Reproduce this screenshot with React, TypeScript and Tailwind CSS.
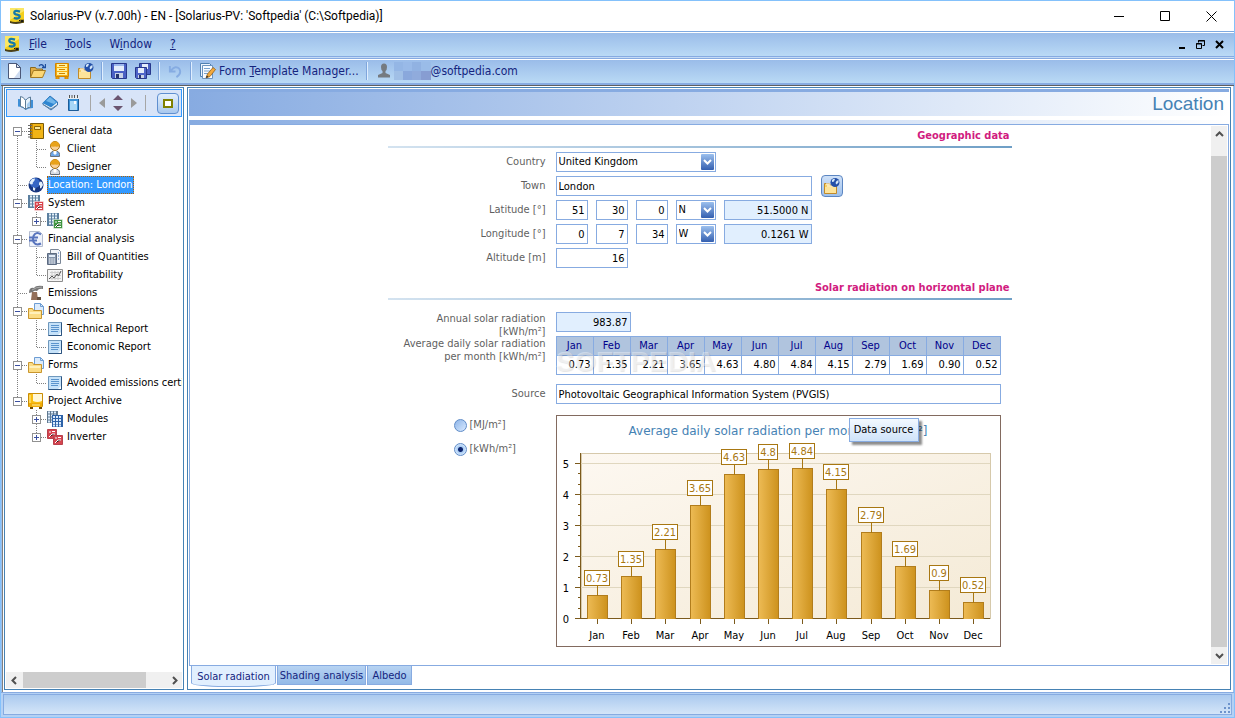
import { ReactNode } from "react";
import clsx from "clsx";

type IconProps = { children: ReactNode; size?: number };

const Icon = ({ children, size = 16 }: IconProps) => (
  <svg width={size} height={size} viewBox="0 0 16 16" className="shrink-0" aria-hidden="true">
    {children}
  </svg>
);

const AppIcon = () => (
  <Icon>
    <path d="M1 0h14v15H1z" fill="#f4cf1c" />
    <path d="M1 0h14v3L1 12z" fill="#fbe765" />
    <path d="M1 13q6 2.500 14-1v2.500q-7 2.500-14 .5z" fill="#4a4018" />
    <path d="M11 3.600Q5.500 1.800 5.300 4.400q0 1.800 2.800 2.300 2.800.5 2.500 2.400Q9.800 11.300 4.800 10" fill="none" stroke="#1579a8" strokeWidth="2.300" />
    <path d="M10 12.500h1.500M12 11.500l1 2.500 1-2.500" fill="none" stroke="#111" />
  </Icon>
);

const NewIcon = () => (
  <Icon>
    <path d="M2.500.5h8l4 4v11h-12z" fill="#fff" stroke="#4b5878" />
    <path d="M8 15l6-8v8z" fill="#cddbf0" />
    <path d="M10.500.5v4h4z" fill="#dfe6f3" stroke="#4b5878" />
  </Icon>
);

const OpenIcon = () => (
  <Icon>
    <path d="M.5 14V4.500h5l1 1.500h6v3" fill="#e2ae45" stroke="#8b6a20" />
    <path d="M.5 14.500l3-7h12l-3 7z" fill="#fbd775" stroke="#a27a22" />
    <path d="M9 3q3-3 5 1M15.500 1v3.500H12" fill="none" stroke="#1f4fa0" strokeWidth="1.300" />
  </Icon>
);

const CabinetIcon = () => (
  <Icon>
    <path d="M1.500.5h13v13h-13zM2 14h3v2H2zM11 14h3v2h-3z" fill="#f6ae10" stroke="#d18400" />
    <path d="M3 2.500h10M3 6.500h10M3 10.500h10" stroke="#fff2a0" strokeWidth="3" />
    <path d="M5 2.500h6M5 6.500h6M5 10.500h6" stroke="#d18400" strokeWidth="1" />
  </Icon>
);

const GlobeFolderIcon = () => (
  <Icon>
    <path d="M.5 15.500v-10h5l1 2h6v8z" fill="#f8d166" stroke="#c18b2a" />
    <path d="M1 9h11v6H1z" fill="#fde49a" />
    <path d="M2 6h4M3 8h7" stroke="#fff" />
    <circle cx="11" cy="4.500" r="4.500" fill="#2450a8" />
    <path d="M8 2q2-2 3-1l-1 2.500-2 .5zM12.500 3l2-1v2.500l-2 2-1-1.500z" fill="#d5e8f8" />
  </Icon>
);

const SaveIcon = () => (
  <Icon>
    <path d="M.5.500h15v15h-14l-1-1z" fill="#4a60c4" stroke="#27388c" />
    <path d="M3 1h10v7H3z" fill="#e4edfb" />
    <path d="M3 1h10v2H3z" fill="#9db8ec" />
    <path d="M4 10h8v5H4z" fill="#c9d2e6" />
    <path d="M5 11h3v4H5z" fill="#26356f" />
  </Icon>
);

const SaveAllIcon = () => (
  <Icon>
    <path d="M4.500.5h11v11h-11z" fill="#4a60c4" stroke="#27388c" />
    <path d="M7 1h6v5H7z" fill="#e4edfb" />
    <path d="M.5 4.500h11v11h-10l-1-1z" fill="#4e64c8" stroke="#27388c" />
    <path d="M3 5h6v5H3z" fill="#e4edfb" />
    <path d="M3 12h6v3H3z" fill="#c9d2e6" />
    <path d="M4 12h2v3H4z" fill="#26356f" />
  </Icon>
);

const UndoIcon = () => (
  <Icon size={15}>
    <path d="M2 2v6h6M3 7q5-6 9-2 3 5-3 9" fill="none" stroke="#86ace2" strokeWidth="2" />
  </Icon>
);

const FormIcon = () => (
  <Icon>
    <path d="M.5.500h9l3 3v10h-12z" fill="#eef5fd" stroke="#4f7fb0" />
    <path d="M2.500 2.500h10v13h-10z" fill="#f8fbff" stroke="#6b93bf" />
    <path d="M4 5.500h6M4 8h6M4 10.500h4" stroke="#78a3cf" />
    <path d="M6 15l1.500-4L13 4.500l2.500 2L10 13.500z" fill="#f3a93c" stroke="#93611a" strokeWidth=".8" />
    <path d="M6 15l.8-2.500 1.700 1.300z" fill="#333" />
  </Icon>
);

const PersonIcon = () => (
  <Icon>
    <path d="M5 4a3 3.500 0 016 0q0 3-1.500 4v2L14 12v2.500H2V12l4.500-2V8Q5 7 5 4z" fill="#757a80" />
  </Icon>
);

const OpenBookIcon = () => (
  <Icon>
    <path d="M0 4v7.500q4 0 7.500 3.500 3-2 7.500-2V5z" fill="#3f8fd6" />
    <path d="M2.500 1.500q3 0 5 4v9q-2-3-5-3z" fill="#fff" stroke="#5c7c98" />
    <path d="M7.500 14.500v-9q2-3 5-3.500v10q-3 0-5 2.500z" fill="#e6f2fc" stroke="#5c7c98" />
    <path d="M9 9l3-3v5l-3 1.500z" fill="#a5cdf0" />
  </Icon>
);

const BlueBookIcon = () => (
  <Icon>
    <path d="M.5 9L8 1l7.500 6v3L9 15z" fill="#eaf3fb" stroke="#3470ac" />
    <path d="M.5 8L8 1l7.500 6L9 12.500z" fill="#2f86d0" />
    <path d="M4 6l4-4 6 5-2 2z" fill="#71b6ea" />
    <path d="M1 9.500l8 4.500 6-4" fill="none" stroke="#65839f" />
  </Icon>
);

const NotebookIcon = () => (
  <Icon>
    <path d="M2.500 2.500h10v13h-10z" fill="#3c93d8" stroke="#1c5c98" />
    <path d="M4 6h7v9H4z" fill="#a8d7f7" />
    <path d="M2 1h11v3H2z" fill="#e8edf2" />
    <path d="M3.500 0v3M6 0v3M8.500 0v3M11.500 0v3" stroke="#555" />
    <path d="M8 6h2v3H8z" fill="#f8fbff" />
  </Icon>
);

const GeneralIcon = () => (
  <Icon>
    <path d="M2.500.5h13v15h-13z" fill="#f2b516" stroke="#7a5a08" />
    <path d="M3 1h2v14H3z" fill="#c98c06" />
    <path d="M6.500 3.500h6v3h-6z" fill="#fbe694" stroke="#8a6508" />
    <path d="M0 2.500h4M0 5.500h4M0 8.500h4M0 11.500h4M0 14h4" stroke="#696969" />
  </Icon>
);

const UserIcon = ({ color }: { color: string }) => (
  <Icon>
    <path d="M3.500 15.500v-2q0-3.500 4.500-3.500t4.500 3.500v2z" fill={color} stroke="#69717c" />
    <path d="M6.500 9.500h3v3L8 14l-1.500-1.500z" fill="#fff" />
    <circle cx="8" cy="5" r="4.500" fill="#f8d098" stroke="#a8700f" />
    <path d="M3.500 5Q3.500.5 8 .5T12.500 5Q11 6 8 5.500 5 6 3.500 5z" fill="#e8a21a" />
  </Icon>
);

const GlobeIcon = () => (
  <Icon>
    <circle cx="8" cy="8" r="7.500" fill="#173680" />
    <circle cx="7" cy="6" r="5" fill="#3566c4" />
    <path d="M1 6l3-4 3-.5-.5 2L4.500 6l.5 1-2 .5zM11 6l1-1.500 2 .5 1 3-2 3.500-1-.5V8.500L11 8zM5 10l2.500 1.500-1 2.500-1.500-1z" fill="#e2f0fb" />
  </Icon>
);

const SystemIcon = ({ color }: { color: string }) => (
  <Icon>
    <path d="M0 0h12v13H0z" fill="#5b7f9f" />
    <path d="M2 1.500h9M2 4.500h9M2 7.500h9M2 10.500h9" stroke="#e6f2fc" strokeWidth="2" strokeDasharray="2 1" />
    <path d="M6.500 6.500h9v9h-9z" fill={color} stroke="#fff" strokeWidth=".5" />
    <path d="M8 9h2M8 14l3-3h3M11 8.500h3M10 13.500h4" stroke="#fff" />
  </Icon>
);

const EuroIcon = () => (
  <Icon>
    <path d="M1.500.5h10l3 3v12h-13z" fill="#eef2fb" stroke="#b4bdd0" />
    <path d="M13 3.500Q8 0 5.500 5q-1 3 0 6Q8 15 13 12.500M1 6.500h9M1 9.500h8" fill="none" stroke="#5874bd" strokeWidth="2" />
  </Icon>
);

const QuantitiesIcon = () => (
  <Icon>
    <path d="M3.500.5h8l2 2v12h-10z" fill="#f2f5fa" stroke="#7a8696" />
    <path d="M11 4h1M11 7h1M11 10h1" stroke="#4a78c0" />
    <path d="M.5 4.500h9v11h-9z" fill="#8494ab" stroke="#5c6a80" />
    <path d="M2 6h6v2H2z" fill="#e4eefa" />
    <path d="M2 10h6M2 12h6M2 14h6" stroke="#fff" strokeDasharray="1.500 .75" />
  </Icon>
);

const ProfitIcon = () => (
  <Icon>
    <path d="M.5 2.500h15v12H.5z" fill="#f4f4f4" stroke="#8d8d8d" />
    <path d="M3 5.500h11M3 8.500h11M3 11.500h11M5 4v9M8 4v9M11 4v9" stroke="#ccc" />
    <path d="M2 12l3-3 2 2 3-4 1.500 2L14 4" fill="none" stroke="#555" />
  </Icon>
);

const EmissionsIcon = () => (
  <Icon>
    <path d="M3 15l1-8h5l1 8z" fill="#94705a" />
    <path d="M9 15v-3h4v3z" fill="#66513f" />
    <path d="M1 8q0-6 5-5 2-3 9-2v3q-4-1-6 2-3-1-4 1z" fill="#777" />
    <path d="M4 5q4-3 10-3" fill="none" stroke="#aaa" />
  </Icon>
);

const DocFolderIcon = () => (
  <Icon>
    <path d="M6.500.5h6l3 3v8h-9z" fill="#dcebfb" stroke="#6d9dd3" />
    <path d="M12.500.5v3h3" fill="none" stroke="#6d9dd3" />
    <path d="M.5 15.500v-10h4l1 2h8v8z" fill="#fbdc85" stroke="#c9962e" />
    <path d="M1.500 10h11" stroke="#fff0bb" strokeWidth="2" />
  </Icon>
);

const ReportIcon = () => (
  <Icon>
    <path d="M1.500 1.500h13v13h-13z" fill="#c6e2f9" stroke="#6f98bd" />
    <path d="M14.500 1.500v13h-13" fill="none" stroke="#2c5480" />
    <path d="M11 14l3-3v3z" fill="#fff" />
    <path d="M4 4.500h8M4 6.500h8M4 8.500h8M4 10.500h7" stroke="#5b94cd" />
  </Icon>
);

const ArchiveIcon = () => (
  <Icon>
    <path d="M.5.500h14v13H.5z" fill="#f8bd12" stroke="#c98c06" />
    <path d="M5 1h9v7q-5 2-9 0z" fill="#fff7d6" />
    <path d="M1 10h13v4H1z" fill="#f0ab08" />
    <path d="M2 2v8M4 12h8" stroke="#fff0a0" />
    <path d="M2 14h3v2H2zM11 14h3v2h-3z" fill="#6d4a04" />
  </Icon>
);

const ModulesIcon = () => (
  <Icon>
    <path d="M0 0h11v12H0z" fill="#5f7890" />
    <path d="M1 1.500h9M1 4.500h9M1 7.500h9M1 10.500h9" stroke="#dcebfc" strokeWidth="2" strokeDasharray="2 1" />
    <path d="M5 4h11v12H5z" fill="#2d62a8" />
    <path d="M6 6h9M6 9h9M6 12h9M6 14.500h9" stroke="#dcebfc" strokeWidth="2" strokeDasharray="2 1" />
  </Icon>
);

const InverterIcon = () => (
  <Icon>
    <path d="M.5.500h9v9h-9zM6.500 6.500h9v9h-9z" fill="#d64550" stroke="#b8414b" />
    <path d="M2 3h2M2 8l3-3h3M5 2.500h3M8 9h2M8 14l3-3h3M11 8.500h3" stroke="#fff" />
  </Icon>
);

/* ---------- tree ---------- */

type Box = "plus" | "minus";
type GuideProps = { up?: boolean; down?: boolean; across?: boolean; box?: Box };

const Guide = ({ up, down, across, box }: GuideProps) => (
  <svg width="19" height="18" viewBox="0 0 19 18" className="shrink-0" shapeRendering="crispEdges">
    <g stroke="#808080" strokeDasharray="1 1">
      {up && <path d="M9.500 0v9" />}
      {down && <path d="M9.500 10v8" />}
      {across && <path d="M10 9.500h9" />}
    </g>
    {box && (
      <>
        <path d="M5.500 5.500h8v8h-8z" fill="#fff" stroke="#919191" />
        <path d="M7 9.500h5" stroke="#3c50a0" />
        {box === "plus" && <path d="M9.500 7v5" stroke="#3c50a0" />}
      </>
    )}
  </svg>
);

type TreeRow = {
  label: string;
  icon: ReactNode;
  guides: GuideProps[];
  selected?: boolean;
};

const line = { up: true, down: true };
const tee = { up: true, down: true, across: true };
const end = { up: true, across: true };

const rows: TreeRow[] = [
  { label: "General data", icon: <GeneralIcon />, guides: [{ down: true, across: true, box: "minus" }] },
  { label: "Client", icon: <UserIcon color="#6ea6e6" />, guides: [line, tee] },
  { label: "Designer", icon: <UserIcon color="#d5dbe3" />, guides: [line, end] },
  { label: "Location: London", icon: <GlobeIcon />, guides: [tee], selected: true },
  { label: "System", icon: <SystemIcon color="#d9434b" />, guides: [{ ...tee, box: "minus" }] },
  { label: "Generator", icon: <SystemIcon color="#3f9540" />, guides: [line, { ...end, box: "plus" }] },
  { label: "Financial analysis", icon: <EuroIcon />, guides: [{ ...tee, box: "minus" }] },
  { label: "Bill of Quantities", icon: <QuantitiesIcon />, guides: [line, tee] },
  { label: "Profitability", icon: <ProfitIcon />, guides: [line, end] },
  { label: "Emissions", icon: <EmissionsIcon />, guides: [tee] },
  { label: "Documents", icon: <DocFolderIcon />, guides: [{ ...tee, box: "minus" }] },
  { label: "Technical Report", icon: <ReportIcon />, guides: [line, tee] },
  { label: "Economic Report", icon: <ReportIcon />, guides: [line, end] },
  { label: "Forms", icon: <DocFolderIcon />, guides: [{ ...tee, box: "minus" }] },
  { label: "Avoided emissions certificate", icon: <ReportIcon />, guides: [line, end] },
  { label: "Project Archive", icon: <ArchiveIcon />, guides: [{ ...end, box: "minus" }] },
  { label: "Modules", icon: <ModulesIcon />, guides: [{}, { ...tee, box: "plus" }] },
  { label: "Inverter", icon: <InverterIcon />, guides: [{}, { ...end, box: "plus" }] },
];

const Tree = () => (
  <ul className="flex-1 overflow-hidden pt-[5px] pl-0.5">
    {rows.map((row) => (
      <li key={row.label} className="flex h-[18px] items-center whitespace-nowrap">
        {row.guides.map((g, i) => (
          <Guide key={i} {...g} />
        ))}
        <span className="ml-px flex">{row.icon}</span>
        <span
          className={clsx(
            "ml-[3px] border leading-4",
            row.selected ? "border-dotted border-[#b06000] bg-[#3399ff] text-white" : "border-transparent"
          )}
        >
          {row.label}
        </span>
      </li>
    ))}
  </ul>
);

const Arrow = ({ d }: { d: string }) => (
  <svg width="9" height="9" viewBox="0 0 9 9" aria-hidden="true">
    <path d={d} fill="none" stroke="#505050" strokeWidth="2" />
  </svg>
);

const scrollButton = "flex h-4 w-4 shrink-0 items-center justify-center";

const Sidebar = () => (
  <aside className="flex w-[180px] shrink-0 flex-col border border-[#4682b4] bg-white p-px">
    <div className="flex h-7 shrink-0 items-center border border-[#3399ff] bg-[#d8e4f8] pr-0.5 pl-[11px]">
      <button aria-label="Contents"><OpenBookIcon /></button>
      <button aria-label="Library" className="ml-2"><BlueBookIcon /></button>
      <button aria-label="Notes" className="ml-2"><NotebookIcon /></button>
      <span className="mx-2 h-4 w-px bg-[#a6a6a6]" />
      <button aria-label="Previous">
        <svg width="6" height="10" viewBox="0 0 6 10"><path d="M6 0v10L0 5z" fill="#9a9a9a" /></svg>
      </button>
      <button aria-label="Up or down" className="mx-2">
        <svg width="10" height="18" viewBox="0 0 10 18"><path d="M0 6l5-5 5 5zM0 12h10l-5 5z" fill="#6b5570" /></svg>
      </button>
      <button aria-label="Next">
        <svg width="6" height="10" viewBox="0 0 6 10"><path d="M0 0v10l6-5z" fill="#9a9a9a" /></svg>
      </button>
      <span className="mx-2 h-4 w-px bg-[#a6a6a6]" />
      <button
        aria-label="Toggle panel"
        className="ml-auto flex h-[21px] w-[22px] items-center justify-center rounded-sm border border-[#5f8fd0] bg-linear-to-b from-[#e3effc] to-[#a9c8ee]"
      >
        <span className="h-[9px] w-2.5 border-2 border-[#808000] bg-white" />
      </button>
    </div>
    <Tree />
    <div className="flex h-4 shrink-0 bg-[#f0f0f0]">
      <button aria-label="Scroll left" className={scrollButton}><Arrow d="M6 1L2.500 4.500 6 8" /></button>
      <div className="h-4 flex-1 pr-5 pl-px">
        <div className="h-full bg-[#cdcdcd]" />
      </div>
      <button aria-label="Scroll right" className={scrollButton}><Arrow d="M3 1l3.500 3.500L3 8" /></button>
    </div>
  </aside>
);

/* ---------- bars ---------- */

const TitleBar = () => (
  <header className="flex h-[30px] shrink-0 items-center bg-white pl-2">
    <AppIcon />
    <h1 className="ml-[5px] font-[Roboto,'Noto_Sans',sans-serif] text-[12px]">
      Solarius-PV (v.7.00h) - EN - [Solarius-PV: 'Softpedia' (C:\Softpedia)]
    </h1>
    <div className="ml-auto flex">
      <button aria-label="Minimize" className="flex h-[30px] w-[46px] items-center justify-center">
        <svg width="11" height="11"><path d="M0 5.500h10" stroke="#000" /></svg>
      </button>
      <button aria-label="Maximize" className="flex h-[30px] w-[46px] items-center justify-center">
        <svg width="11" height="11"><path d="M.5.500h9v9h-9z" fill="none" stroke="#000" /></svg>
      </button>
      <button aria-label="Close" className="flex h-[30px] w-[46px] items-center justify-center">
        <svg width="11" height="11"><path d="M.5.500l10 10M10.500.5l-10 10" stroke="#000" /></svg>
      </button>
    </div>
  </header>
);

const MenuBar = () => (
  <nav className="flex h-6 shrink-0 items-center border-t border-white bg-linear-to-b from-[#9abce9] to-[#badaf5] pr-2.5 pb-px pl-[3px] text-[12px] text-[#14247e]">
    <AppIcon />
    <div className="flex gap-[18px] pl-[9px]">
      <button><u>F</u>ile</button>
      <button><u>T</u>ools</button>
      <button>W<u>i</u>ndow</button>
      <button><u>?</u></button>
    </div>
    <div className="ml-auto flex items-center gap-2.5">
      <button aria-label="Minimize document"><svg width="8" height="9"><path d="M1 8h6" stroke="#000" strokeWidth="2" /></svg></button>
      <button aria-label="Restore document">
        <svg width="9" height="9"><path d="M2.500 2.500v-2h6v5h-2M2 1h7M.5 3.500h5v5h-5zM0 4h6" fill="none" stroke="#000" /></svg>
      </button>
      <button aria-label="Close document"><svg width="9" height="9"><path d="M1 1l7 7M8 1L1 8" stroke="#000" strokeWidth="2" /></svg></button>
    </div>
  </nav>
);

const Separator = () => <span className="mx-2 h-[18px] w-px bg-[#dfeeff] shadow-[-1px_0_0_#7fa6dc]" />;

const ToolBar = () => (
  <div className="flex h-6 shrink-0 items-center border-t border-white bg-linear-to-b from-[#9abce9] to-[#badaf5] pb-px pl-[5px] text-[12px] text-[#14247e]">
    <div className="flex gap-2">
      <button aria-label="New"><NewIcon /></button>
      <button aria-label="Open"><OpenIcon /></button>
      <button aria-label="Archive"><CabinetIcon /></button>
      <button aria-label="Open from web"><GlobeFolderIcon /></button>
    </div>
    <Separator />
    <div className="flex gap-2">
      <button aria-label="Save"><SaveIcon /></button>
      <button aria-label="Save all"><SaveAllIcon /></button>
    </div>
    <Separator />
    <button aria-label="Undo"><UndoIcon /></button>
    <Separator />
    <button className="flex items-center gap-[3px]">
      <FormIcon />
      <span>Form <u>T</u>emplate Manager...</span>
    </button>
    <Separator />
    <PersonIcon />
    <span className="ml-0.5 grid h-[18px] w-[37px] grid-cols-4">
      <i className="bg-[#94b6e5]" /><i className="bg-[#99bae8]" /><i className="bg-[#91b2e2]" /><i className="bg-[#9abce8]" />
      <i className="bg-[#a0bfe6]" /><i className="bg-[#8aa8dc]" /><i className="bg-[#90abdc]" /><i className="bg-[#879dd2]" />
    </span>
    <span>@softpedia.com</span>
  </div>
);

/* ---------- form ---------- */

const box = "h-5 border border-[#87abe1] outline-none";
const field = `${box} bg-white px-0.5`;
const readOnlyField = `${box} bg-[#e1effe] pr-0.5 text-right`;
const label = "w-[158px] shrink-0 text-right text-[#5f5f5f]";

const SectionTitle = ({ children }: { children: ReactNode }) => (
  <div>
    <h3 className="pr-0.5 text-right leading-4 font-bold text-[#d11c7f]">{children}</h3>
    <div className="mt-0.5 h-0.5 bg-linear-to-r from-[#d4e3f0] to-[#6f9fc6]" />
  </div>
);

type SelectProps = { id: string; options: string[]; wide?: boolean; title?: string };

const Select = ({ id, options, wide, title }: SelectProps) => (
  <div className={clsx("relative h-5", wide ? "w-40" : "w-10")}>
    <select id={id} aria-label={title} className={clsx(field, "block w-full appearance-none leading-[18px]")}>
      {options.map((o) => (
        <option key={o}>{o}</option>
      ))}
    </select>
    <svg width="13" height="16" className="pointer-events-none absolute top-0.5 right-0.5" aria-hidden="true">
      <defs>
        <linearGradient id={`${id}-g`} x1="0" y1="0" x2="0" y2="1">
          <stop offset="0" stopColor="#9cc0ee" />
          <stop offset="1" stopColor="#345fb0" />
        </linearGradient>
      </defs>
      <rect width="13" height="16" rx="1" fill={`url(#${id}-g)`} />
      <path d="M3 6l3.500 3.500L10 6" fill="none" stroke="#fff" strokeWidth="2" />
    </svg>
  </div>
);

type CoordProps = { name: string; values: string[]; sides: string[]; result: string };

const CoordRow = ({ name, values, sides, result }: CoordProps) => (
  <div className="flex items-center">
    <label htmlFor={name} className={label}>{name} [°]</label>
    <div className="ml-2.5 flex gap-2">
      {values.map((v, i) => (
        <input
          key={i}
          id={i === 0 ? name : undefined}
          aria-label={["degrees", "minutes", "seconds"][i]}
          className={clsx(field, "w-8 text-right")}
          defaultValue={v}
        />
      ))}
      <Select id={`${name}-side`} title={`${name} side`} options={sides} />
      <input aria-label={`${name} decimal`} readOnly className={clsx(readOnlyField, "w-[88px]")} value={result} />
    </div>
  </div>
);

const months = ["Jan", "Feb", "Mar", "Apr", "May", "Jun", "Jul", "Aug", "Sep", "Oct", "Nov", "Dec"];
const radiation = [0.73, 1.35, 2.21, 3.65, 4.63, 4.8, 4.84, 4.15, 2.79, 1.69, 0.9, 0.52];

const Chart = () => {
  const base = 203;
  const unit = 31;
  const left = 24;
  const step = 34.18;

  return (
    <svg viewBox="0 0 443 230" className="block w-full" role="img" aria-label="Average daily solar radiation per month">
      <defs>
        <linearGradient id="bar">
          <stop offset="0" stopColor="#edbb55" />
          <stop offset="1" stopColor="#cd921d" />
        </linearGradient>
        <linearGradient id="plot" x1="0" y1="0" x2="1" y2="1">
          <stop offset="0" stopColor="#fdf8f1" />
          <stop offset="1" stopColor="#f4ead6" />
        </linearGradient>
      </defs>
      <text x="221" y="19" textAnchor="middle" className="font-['DejaVu_Sans',sans-serif]" fontSize="12" fill="#4682b4">
        Average daily solar radiation per month [kWh/m²]
      </text>
      <g shapeRendering="crispEdges">
        <path d="M24.500 37.500h409v165h-409z" fill="url(#plot)" stroke="#d6c9ab" />
        {[1, 2, 3, 4, 5].map((n) => (
          <path key={n} d={`M24 ${base - n * unit - 0.5}h409`} stroke="#e0d7bf" />
        ))}
        {Array.from({ length: 16 }, (_, i) => (
          <path
            key={i}
            d={`M${i % 3 ? 21 : 18} ${base - 0.5 - Math.round((i * unit) / 3)}H24`}
            stroke="#7c5a1c"
          />
        ))}
        <path d="M23.500 37v166M18 202.500h415" stroke="#7c5a1c" />
      </g>
      {[0, 1, 2, 3, 4, 5].map((n) => (
        <text key={n} x="12" y={base + 4 - n * unit} textAnchor="end" fontSize="11">{n}</text>
      ))}
      {radiation.map((v, i) => {
        const x = Math.round(left + step * (i + 0.5)) - 1;
        const top = Math.round(base - v * unit);
        const w = String(v).length > 3 ? 25 : 19;
        return (
          <g key={months[i]}>
            <g shapeRendering="crispEdges">
              <path d={`M${x - 9.5} ${base - 0.5}V${top - 0.5}h20V${base - 0.5}`} fill="url(#bar)" stroke="#b27d1c" />
              <path d={`M${x + 0.5} ${top - 11}v11`} stroke="#a87712" />
              <path d={`M${x + 0.5} ${base}v5`} stroke="#7c5a1c" />
              <rect x={x - Math.floor(w / 2) - 0.5} y={top - 25.500} width={w} height="15" fill="#fff" stroke="#a87712" />
            </g>
            <text x={x} y={top - 14} textAnchor="middle" fontSize="11" fill="#a87712">{v}</text>
            <text x={x} y="223" textAnchor="middle" fontSize="11">{months[i]}</text>
          </g>
        );
      })}
    </svg>
  );
};

const radio =
  "h-[13px] w-[13px] appearance-none rounded-full border border-[#5f8cc8] bg-linear-to-br from-[#8fb5e8] to-[#d8eaff] checked:bg-[radial-gradient(circle,#0d256e_0_2px,#a9ccf3_3px,#dcecff_6px)]";

const LocationForm = () => (
  <form className="mx-auto w-[624px] pt-[3px]">
    <SectionTitle>Geographic data</SectionTitle>
    <div className="mt-1 flex flex-col gap-1">
      <div className="flex items-center">
        <label htmlFor="country" className={label}>Country</label>
        <div className="ml-2.5"><Select id="country" wide options={["United Kingdom", "Italy", "France"]} /></div>
      </div>
      <div className="flex h-5 items-center">
        <label htmlFor="town" className={label}>Town</label>
        <input id="town" className={clsx(field, "ml-2.5 w-64")} defaultValue="London" />
        <button
          type="button"
          aria-label="Select town"
          className="ml-[9px] flex h-[22px] w-[22px] items-center justify-center rounded-sm border border-[#5c86c2] bg-linear-to-b from-[#cfe1f8] to-[#9fc1ec]"
        >
          <GlobeFolderIcon />
        </button>
      </div>
      <CoordRow name="Latitude" values={["51", "30", "0"]} sides={["N", "S"]} result="51.5000 N" />
      <CoordRow name="Longitude" values={["0", "7", "34"]} sides={["W", "E"]} result="0.1261 W" />
      <div className="flex items-center">
        <label htmlFor="altitude" className={label}>Altitude [m]</label>
        <input id="altitude" className={clsx(field, "ml-2.5 w-[72px] text-right")} defaultValue="16" />
      </div>
    </div>

    <div className="mt-3">
      <SectionTitle>Solar radiation on horizontal plane</SectionTitle>
    </div>
    <div className="mt-3 flex h-6 leading-[13px]">
      <label htmlFor="annual" className={label}>Annual solar radiation [kWh/m²]</label>
      <input id="annual" readOnly className={clsx(readOnlyField, "ml-2.5 w-[75px]")} value="983.87" />
    </div>
    <div className="flex h-[39px]">
      <span id="monthly" className={clsx(label, "pt-px leading-[13px]")}>
        Average daily solar radiation per month [kWh/m²]
      </span>
      <div className="relative ml-2.5 w-[445px]">
        <table aria-labelledby="monthly" className="w-full table-fixed border-collapse">
          <thead>
            <tr className="h-[19px] bg-[#b0c4de] text-[#00008b]">
              {months.map((m) => (
                <th key={m} scope="col" className="border border-[#87abe1] p-0 leading-[18px] font-normal">{m}</th>
              ))}
            </tr>
          </thead>
          <tbody>
            <tr className="h-[19px]">
              {radiation.map((v, i) => (
                <td key={i} className="border border-[#87abe1] p-0 pr-0.5 text-right leading-[18px]">{v.toFixed(2)}</td>
              ))}
            </tr>
          </tbody>
        </table>
        <span className="pointer-events-none absolute top-2.5 left-0 font-['Liberation_Sans',Arial,sans-serif] text-[28px] leading-8 font-bold text-white/40 [text-shadow:1px_1px_1px_rgba(0,0,0,0.1)]">
          SOFTPEDIA
        </span>
      </div>
    </div>
    <div className="mt-[9px] flex items-center">
      <label htmlFor="source" className={label}>Source</label>
      <input id="source" className={clsx(field, "ml-2.5 w-[445px]")} defaultValue="Photovoltaic Geographical Information System (PVGIS)" />
    </div>
    <div className="mt-[11px] flex">
      <div className="w-[168px] pl-[66px] text-[#5f5f5f]">
        <label className="mt-0.5 flex h-4 items-center gap-[3px]"><input type="radio" name="unit" className={radio} />[MJ/m²]</label>
        <label className="mt-2 flex h-4 items-center gap-[3px]"><input type="radio" name="unit" defaultChecked className={radio} />[kWh/m²]</label>
      </div>
      <div className="relative w-[445px] border border-[#826a5f] bg-white">
        <Chart />
        <div
          role="tooltip"
          className="absolute top-0.5 left-[292px] flex h-6 w-[70px] items-center justify-center border border-[#87abe1] bg-linear-to-b from-[#f3f9ff] to-[#cfe3f9] whitespace-nowrap shadow-[3px_3px_2px_rgba(0,0,0,0.45)]"
        >
          Data source
        </div>
      </div>
    </div>
  </form>
);

const tab = "h-[19px] border border-t-0 border-[#87abe1] bg-linear-to-b from-[#b7d3f2] to-[#93bae8] pt-0.5 text-center";

const Workspace = () => (
  <main className="flex min-w-0 flex-1 flex-col border border-[#4682b4] bg-white p-px">
    <div className="h-[3px] bg-[#87abe1]" />
    <h2 className="flex h-6 shrink-0 items-center justify-end bg-linear-to-r from-[#87abe1] to-white pr-[5px] font-['Liberation_Sans',Arial,sans-serif] text-[19px] text-[#4682b4]">
      Location
    </h2>
    <div className="mt-1 h-1 shrink-0 bg-linear-to-r from-[#87abe1] to-white" />
    <div className="flex flex-1 border border-[#87abe1] pr-px">
      <div className="min-w-0 flex-1 pr-0.5">
        <LocationForm />
      </div>
      <div className="my-px flex w-4 flex-col bg-[#f0f0f0]">
        <button aria-label="Scroll up" className="flex h-[30px] w-4 justify-center pt-1"><Arrow d="M1 6l3.500-3.500L8 6" /></button>
        <div className="flex-1 bg-[#cdcdcd]" />
        <button aria-label="Scroll down" className="flex h-[17px] w-4 items-center justify-center"><Arrow d="M1 3l3.500 3.500L8 3" /></button>
      </div>
    </div>
    <div role="tablist" className="flex h-[22px] shrink-0 gap-px pl-0.5 text-[#14247e]">
      <button role="tab" aria-selected="true" className="h-[21px] w-[85px] rounded-b-[40%_4px] border border-t-0 border-[#87abe1] bg-[#e1effe] pt-0.5">
        Solar radiation
      </button>
      <button role="tab" aria-selected="false" className={clsx(tab, "w-[89px]")}>Shading analysis</button>
      <button role="tab" aria-selected="false" className={clsx(tab, "w-[45px]")}>Albedo</button>
    </div>
  </main>
);

const App = () => (
  <div className="flex min-h-screen flex-col border border-[#84c1fb] bg-[#9dc0eb] font-['DejaVu_Sans_Condensed','Noto_Sans',sans-serif] text-[11px] text-black">
    <TitleBar />
    <div className="h-px shrink-0 bg-[#7fa9e0]" />
    <MenuBar />
    <div className="h-[3px] shrink-0 border-y border-[#87abe1] bg-[#c4dbf6]" />
    <ToolBar />
    <div className="h-[3px] shrink-0 border-b border-[#606060] bg-[#87abe1]" />
    <div className="mx-px flex flex-1 gap-[3px] border-l border-[#808080] bg-white pt-px pr-0.5 pb-0.5 pl-px">
      <Sidebar />
      <Workspace />
    </div>
    <footer className="shrink-0 border-t border-[#87abe1] bg-[#b4d1f4] p-0.5 pt-px">
      <div className="h-[21px] border border-[#87abe1] bg-linear-to-b from-[#abcaef] to-[#d4e5f8]">
        <svg width="12" height="12" className="mt-[7px] ml-auto" aria-hidden="true">
          <path d="M9 1h2v2H9zM9 5h2v2H9zM5 5h2v2H5zM9 9h2v2H9zM5 9h2v2H5zM1 9h2v2H1z" fill="#6d93cc" />
        </svg>
      </div>
    </footer>
  </div>
);

export default App;
